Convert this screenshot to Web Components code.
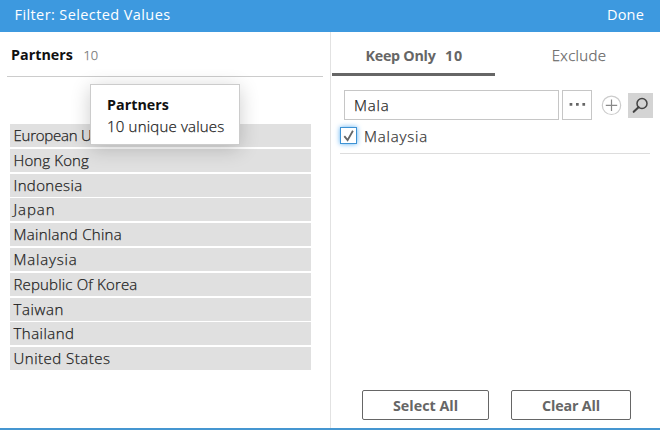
<!DOCTYPE html>
<html lang="en">
<head>
<meta charset="utf-8">
<title>Filter: Selected Values</title>
<style>
html,body{margin:0;width:660px;height:430px;overflow:hidden;background:#fff}
body{font:300 15px/20px "Open Sans","Noto Sans",sans-serif;color:#222;-webkit-text-stroke:.25px currentColor}
</style>
</head>
<body>
<filter-dialog></filter-dialog>
<script>
function define(name, html, setup) {
  customElements.define(name, class extends HTMLElement {
    connectedCallback() {
      if (this.shadowRoot) return;
      const t = document.createElement('template');
      t.innerHTML = html;
      this.attachShadow({mode: 'open'}).append(t.content.cloneNode(true));
      if (setup) setup(this, this.shadowRoot);
    }
  });
}

// Label whose tracking is adjusted so that it takes the given width.
define('fit-label', `<style>:host{display:inline-block;white-space:pre}span{display:inline-block}</style><span><slot></slot></span>`,
  (el, root) => {
    const target = Number(el.getAttribute('width'));
    const span = root.querySelector('span');
    const natural = span.getBoundingClientRect().width;
    const n = el.textContent.length;
    if (target && natural && n) span.style.letterSpacing = ((target - natural) / n).toFixed(3) + 'px';
  });

define('dialog-header', `<style>
:host{display:flex;justify-content:space-between;box-sizing:border-box;height:32px;padding:5px 16px 0 14.5px;background:#3d99df;color:#fff;font-size:14.5px;font-weight:400;-webkit-text-stroke:0}
</style><fit-label width="156">Filter: Selected Values</fit-label><fit-label width="37">Done</fit-label>`);

define('value-row', `<style>
:host{display:block;height:24.8px;font-size:15px}
div{height:23px;padding-left:3.5px;background:#e0e0e0;line-height:23px;box-sizing:border-box}
</style><div><slot></slot></div>`);

define('info-tooltip', `<style>
:host{position:absolute;left:90px;top:84px;box-sizing:border-box;width:150px;height:61px;padding:9px 0 0 16px;background:#fff;border:1px solid #ccc;box-shadow:0 4px 20px rgba(0,0,0,.2);color:#222;line-height:22px}
b{display:block;height:21px;font-size:14.3px;font-weight:700;color:#111;-webkit-text-stroke:0}
fit-label{vertical-align:top}
</style><b><fit-label width="62">Partners</fit-label></b><fit-label width="117.5">10 unique values</fit-label>`);

define('values-panel', `<style>
:host{display:block;box-sizing:border-box;width:331px;border-right:1px solid #e2e2e2}
header{display:flex;box-sizing:border-box;height:45px;margin:0 7px 0 7px;padding:13px 0 0 4px;border-bottom:1px solid #ccc;color:#111;font-size:14.3px}
b{font-weight:700;-webkit-text-stroke:0}
small{font-size:12.8px;color:#777;margin-left:10.5px}
section{margin:47px 19px 0 10px;color:#222}
</style>
<header><b><fit-label width="62">Partners</fit-label></b><small>10</small></header>
<section></section>`, (el, root) => {
  const rows = [['European Union',107],['Hong Kong',75.5],['Indonesia',69],['Japan',42],['Mainland China',108.5],['Malaysia',64],['Republic Of Korea',124],['Taiwan',50.5],['Thailand',61],['United States',97]];
  root.querySelector('section').innerHTML = rows.map(([t, w]) => `<value-row><fit-label width="${w}">${t}</fit-label></value-row>`).join('');
});

define('filter-tabs', `<style>
:host{display:grid;grid-template-columns:163px 1fr;height:44px;padding-left:1px;color:#666}
div{box-sizing:border-box;padding-top:14px;text-align:center}
.on{font-weight:700;-webkit-text-stroke:0;border-bottom:3px solid #666;display:flex;padding-left:33.5px;font-size:14.3px}
.off{padding:13px 0 0 3px;font-size:15px}
.n{margin-left:9.5px}
</style><div class="on"><fit-label width="70">Keep Only</fit-label><fit-label class="n" width="18">10</fit-label></div>
<div class="off"><fit-label width="54.5">Exclude</fit-label></div>`);

define('search-bar', `<style>
:host{display:flex;align-items:center;margin:14px 0 0 13px;height:30px}
.field,.more{box-sizing:border-box;height:30px;border:1px solid #c6c6c6}
.field{width:215px;padding:4px 0 0 9px}
.more{width:30px;margin-left:3px}
.add{margin-left:9px}
.find{display:block;margin-left:6px;width:25px;height:25px;background:#d4d4d4}
svg{display:block}
</style>
<div class="field"><fit-label width="35.5">Mala</fit-label></div>
<div class="more"><svg width="28" height="28"><path d="M6.6 12h2.7v2.7H6.6zM13 12h2.7v2.7H13zM19.4 12h2.7v2.7h-2.7z" fill="#666"/></svg></div>
<svg class="add" width="21" height="21" fill="none"><circle cx="10.5" cy="10.3" r="9.2" stroke="#ccc" stroke-width="1.2"/><path d="M10.5 4.6v11.4M4.8 10.3h11.4" stroke="#888" stroke-width="1.2"/></svg>
<div class="find"><svg width="25" height="25" fill="none" stroke="#444"><circle cx="14" cy="10.5" r="5" stroke-width="1.5"/><path d="M10.5 14.2L5.7 18.8" stroke-width="2.1" stroke-linecap="round"/></svg></div>`);

define('check-item', `<style>
:host{display:flex;box-sizing:border-box;height:34px;margin:0 10px 0 9px;padding-top:7px;border-bottom:1px solid #ddd;color:#333}
i{box-sizing:border-box;width:17px;height:17px;border:1px solid #3d92d4;box-shadow:0 0 5px #58aef2;margin-right:7px;background:#fff}
svg{display:block}
.t{margin-top:-1px}
</style><i><svg width="15" height="15"><path d="M3.3 8.1l3.3 4L11.9 2.8" fill="none" stroke="#666" stroke-width="1.8"/></svg></i><span class="t"><slot></slot></span>`);

define('outline-button', `<style>
:host{display:block;box-sizing:border-box;height:30px;border:1px solid #666;border-radius:2px;color:#666;font-weight:700;-webkit-text-stroke:0;font-size:14.3px;line-height:29px;text-align:center}
</style><slot></slot>`);

define('filter-panel', `<style>
:host{display:flex;flex-direction:column;flex:1}
footer{display:flex;gap:22px;margin:auto 0 8px 31px}
.a{width:127px}.b{width:120px}
</style>
<filter-tabs></filter-tabs><search-bar></search-bar>
<check-item><fit-label width="64">Malaysia</fit-label></check-item>
<footer><outline-button class="a"><fit-label width="65">Select All</fit-label></outline-button><outline-button class="b"><fit-label width="58">Clear All</fit-label></outline-button></footer>`);

define('filter-dialog', `<style>
:host{display:flex;flex-direction:column;position:relative;box-sizing:border-box;width:660px;height:430px;border-bottom:2px solid #4596d1;background:#fff}
main{display:flex;flex:1}
</style><dialog-header></dialog-header><main><values-panel></values-panel><filter-panel></filter-panel></main><info-tooltip></info-tooltip>`);
</script>
</body>
</html>
